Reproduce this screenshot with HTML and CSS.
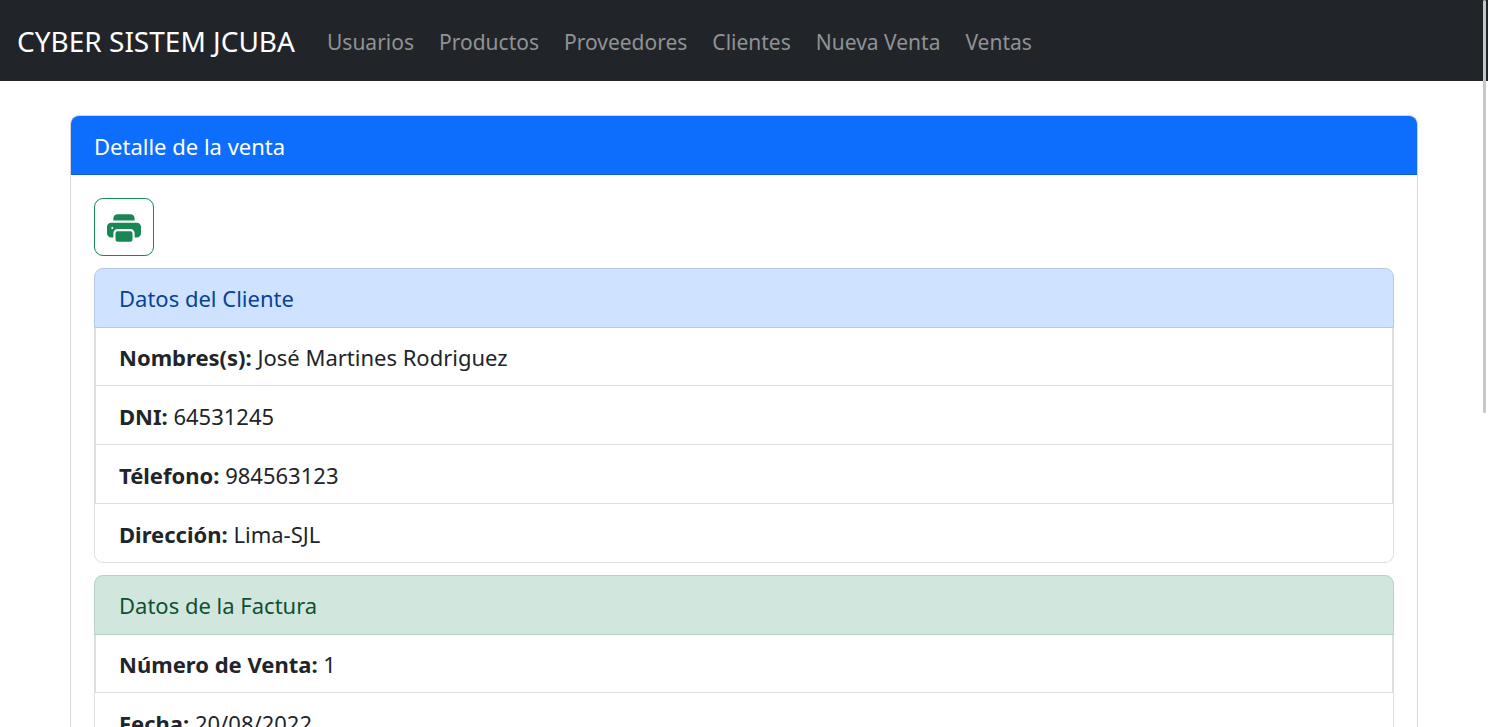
FILE: index.html
```html
<!DOCTYPE html>
<html lang="es">
<head>
<meta charset="utf-8">
<meta name="viewport" content="width=device-width, initial-scale=1">
<title>Detalle de la venta</title>
<link rel="stylesheet" href="styles.css">
</head>
<body>
<nav class="navbar">
  <a class="brand" href="#">CYBER SISTEM JCUBA</a>
  <ul class="nav-links">
    <li><a href="#">Usuarios</a></li>
    <li><a href="#">Productos</a></li>
    <li><a href="#">Proveedores</a></li>
    <li><a href="#">Clientes</a></li>
    <li><a href="#">Nueva Venta</a></li>
    <li><a href="#">Ventas</a></li>
  </ul>
</nav>
<main class="container">
  <section class="card">
    <header class="card-header">Detalle de la venta</header>
    <div class="card-body">
      <button class="print-button" type="button" aria-label="Imprimir">
        <svg viewBox="0 0 16 16" aria-hidden="true"><path d="M5 1a2 2 0 0 0-2 2v1h10V3a2 2 0 0 0-2-2H5zm6 8H5a1 1 0 0 0-1 1v3a1 1 0 0 0 1 1h6a1 1 0 0 0 1-1v-3a1 1 0 0 0-1-1z"/><path d="M0 7a2 2 0 0 1 2-2h12a2 2 0 0 1 2 2v3a2 2 0 0 1-2 2h-1v-2a2 2 0 0 0-2-2H5a2 2 0 0 0-2 2v2H2a2 2 0 0 1-2-2V7zm2.5 1a.5.5 0 1 0 0-1 .5.5 0 0 0 0 1z"/></svg>
      </button>
      <ul class="list">
        <li class="list-title client">Datos del Cliente</li>
        <li><strong>Nombres(s):</strong> José Martines Rodriguez</li>
        <li><strong>DNI:</strong> 64531245</li>
        <li><strong>Télefono:</strong> 984563123</li>
        <li><strong>Dirección:</strong> Lima-SJL</li>
      </ul>
      <ul class="list">
        <li class="list-title invoice">Datos de la Factura</li>
        <li><strong>Número de Venta:</strong> 1</li>
        <li><strong>Fecha:</strong> 20/08/2022</li>
      </ul>
    </div>
  </section>
</main>
<div class="scroll-thumb"></div>
</body>
</html>
```
FILE: styles.css
```css
* { box-sizing: border-box; }
html { scrollbar-width: none; }
body {
  margin: 0;
  background: #fff;
  color: #212529;
  font-family: "Segoe UI", "Noto Sans", "Open Sans", sans-serif;
  font-size: 22px;
  line-height: 35px;
}
ul { margin: 0; padding: 0; list-style: none; }
a { text-decoration: none; }

.navbar {
  display: flex;
  align-items: center;
  gap: 32px;
  padding: 21px 17px 19px;
  background: #212529;
}
.brand { color: #fff; font-size: 28px; line-height: 41px; }
.nav-links { display: flex; gap: 25px; padding-top: 2px; font-size: 21px; }
.nav-links a { color: #909294; }

.container { margin: 0 70px; padding: 34px 0; }
.card { border: 1px solid #d6d6d6; border-radius: 9px; }
.card-header {
  padding: 13px 23px 10px;
  border-bottom: 1px solid #0b5cd9;
  border-radius: 8px 8px 0 0;
  background: #0d6efd;
  color: #fff;
}
.card-body {
  display: flex;
  flex-direction: column;
  gap: 12px;
  padding: 23px;
}
.print-button {
  display: flex;
  align-self: flex-start;
  padding: 13px 12px 9px;
  border: 1px solid #198754;
  border-radius: 9px;
  background: #fff;
  color: #198754;
}
.print-button svg { width: 34px; height: 34px; fill: currentColor; }

.list li {
  padding: 13px 23px 10px;
  border: 2px solid #dfdfdf;
  border-width: 0 2px 1px;
}
.list .list-title + li { padding-top: 12px; }
.list li:last-child {
  padding: 13px 24px 10px;
  border-width: 0 1px 1px;
  border-radius: 0 0 9px 9px;
}
.list .list-title {
  padding: 12px 24px 11px;
  border-width: 1px;
  border-radius: 9px 9px 0 0;
}
.list .client { border-color: #b6c8e4; background: #cfe2ff; color: #084298; }
.list .invoice { border-color: #b9cec4; background: #d1e7dd; color: #0f5132; }

.scroll-thumb {
  position: fixed;
  top: 0;
  right: 2px;
  width: 3px;
  height: 413px;
  border-radius: 2px;
  background: #c8c8c8;
}
```
